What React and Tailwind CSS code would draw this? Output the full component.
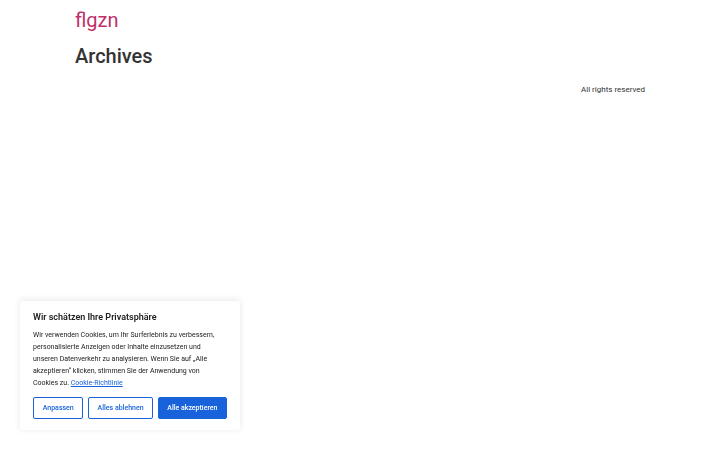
import React from 'react';

const CookieBanner = () => (
    <div className="fixed left-[20px] bottom-[20px] w-[220px] bg-white rounded-[3px] shadow-[0_-1px_6px_0_rgba(172,171,171,0.3)] px-[13px] pt-[10px] pb-[11px] font-['Roboto',sans-serif]">
        <p className="text-[9px] font-semibold text-[#212121] leading-[12px] mb-[6px]">Wir schätzen Ihre Privatsphäre</p>
        <p className="text-[7px] leading-[12px] text-[#212121] mr-[6px]">
            Wir verwenden Cookies, um Ihr Surferlebnis zu verbessern, personalisierte Anzeigen oder Inhalte einzusetzen und unseren Datenverkehr zu analysieren. Wenn Sie auf „Alle akzeptieren“ klicken, stimmen Sie der Anwendung von Cookies zu.{' '}
            <a className="text-[#1863dc] underline">Cookie-Richtlinie</a>
        </p>
        <div className="flex gap-[5px] mt-[8px]">
            <button className="w-[51px] h-[22px] border border-[#1863dc] rounded-[2px] text-[#1863dc] text-[7px] font-medium">Anpassen</button>
            <button className="w-[65px] h-[22px] border border-[#1863dc] rounded-[2px] text-[#1863dc] text-[7px] font-medium">Alles ablehnen</button>
            <button className="w-[70px] h-[22px] border border-[#1863dc] bg-[#1863dc] rounded-[2px] text-white text-[7px] font-medium">Alle akzeptieren</button>
        </div>
    </div>
);

export default function App() {
    return (
        <div className="w-full min-h-screen bg-white font-['Roboto',sans-serif]">
            <div className="w-[570px] mx-auto">
                <header className="pt-[5px]">
                    <a className="text-[20px] leading-[30px] text-[#c0306a] font-normal">flgzn</a>
                </header>
                <h1 className="text-[20px] leading-[30px] font-medium text-[#333] mt-[6px]">Archives</h1>
                <footer className="flex justify-end mt-[12px]">
                    <p className="text-[8px] text-[#333] leading-[14px]">All rights reserved</p>
                </footer>
            </div>
            <CookieBanner />
        </div>
    );
}
